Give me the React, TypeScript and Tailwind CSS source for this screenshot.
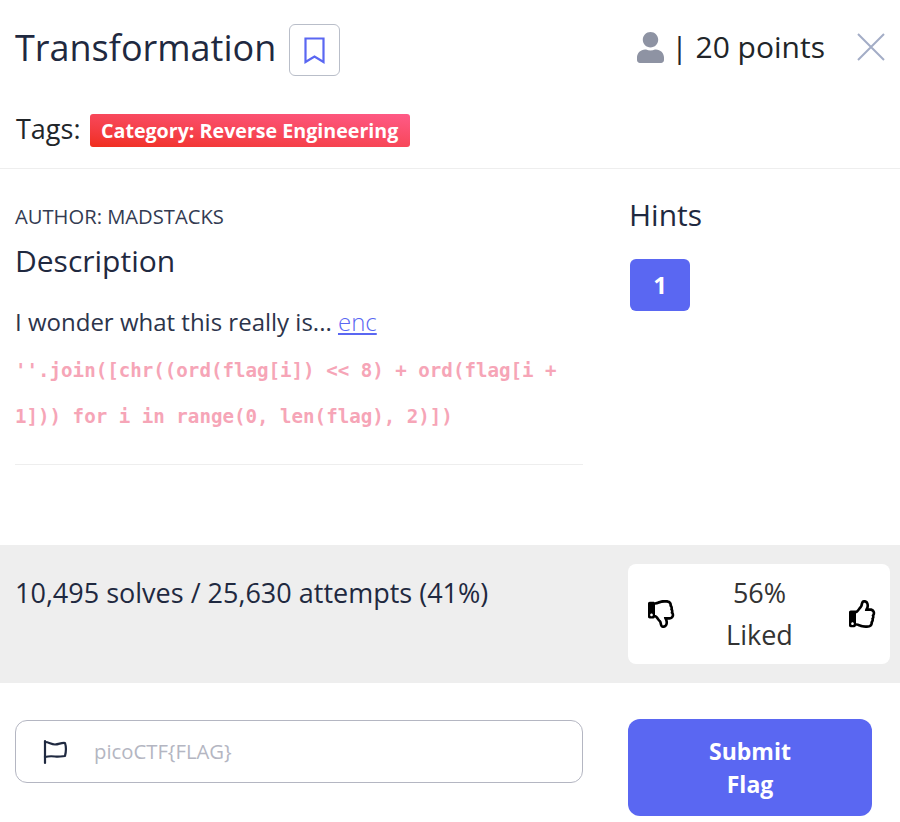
import { FaUser } from "react-icons/fa";
import { FaRegThumbsDown, FaRegThumbsUp } from "react-icons/fa";

function App() {
    return (
        <div className="w-[900px] h-[822px] overflow-hidden bg-white text-[#212529] font-['Open_Sans',sans-serif]">
            <div className="h-[169px] border-b border-[#eeeeee] flex flex-col">
                <div className="h-[114px] pl-[15px] pr-[14px] flex items-start justify-between">
                    <div className="flex items-center mt-[24px] gap-[13px]">
                        <h1 className="text-[36px] leading-[46px] text-[#1f2940] -mt-[5px]">Transformation</h1>
                        <button className="w-[51px] h-[52px] border border-[#b9bec9] rounded-md flex items-center justify-center">
                            <svg className="w-[21px] h-[27px] text-[#5a67f2]" viewBox="0 0 21 27" fill="none" stroke="currentColor" strokeWidth="2.2" strokeLinejoin="miter">
                                <path d="M1.5 1.5h18v23.5l-9-5.5-9 5.5z" />
                            </svg>
                        </button>
                    </div>
                    <div className="flex items-center mt-[23px] h-[48px]">
                        <FaUser className="w-[27px] h-[31px] text-[#8e93a3]" />
                        <span className="text-[30px] ml-[7px] -mt-[2px] text-[#212529]">| 20 points</span>
                        <svg className="w-[30px] h-[30px] ml-[31px] text-[#a3adc6]" viewBox="0 0 30 30" fill="none" stroke="currentColor" strokeWidth="2">
                            <path d="M2 2l26 26M28 2L2 28" />
                        </svg>
                    </div>
                </div>
                <div className="flex items-center pl-[16px] gap-[9px]">
                    <span className="text-[27px] leading-[32px] -mt-[4px]">Tags:</span>
                    <span className="h-[33px] px-[11.5px] rounded-[3px] flex items-center text-white font-bold text-[19.65px] bg-gradient-to-tr from-[#f02d1a] to-[#ff5a87]">
                        Category: Reverse Engineering
                    </span>
                </div>
            </div>

            <div className="h-[376px] flex">
                <div className="w-[583px] pl-[15px] pt-[32px]">
                    <p className="text-[20.2px] leading-[30px] text-[#333b52]">AUTHOR: MADSTACKS</p>
                    <h3 className="text-[30px] leading-[40px] mt-[10px] text-[#1f2940]">Description</h3>
                    <p className="text-[24px] leading-[36px] mt-[23px] text-[#2c344b]">
                        I wonder what this really is... <a className="text-[#5a67f2] underline font-light">enc</a>
                    </p>
                    <div className="mt-[8px] pb-[24px] border-b border-[#eeeeee]">
                        <code className="block text-[19.15px] leading-[46px] font-bold text-[#f6a5b7] font-['DejaVu_Sans_Mono',monospace]">
                            ''.join([chr((ord(flag[i]) &lt;&lt; 8) + ord(flag[i +<br />
                            1])) for i in range(0, len(flag), 2)])
                        </code>
                    </div>
                </div>
                <div className="flex-1 pl-[46px] pt-[26px]">
                    <h3 className="text-[30px] leading-[40px] text-[#1f2940]">Hints</h3>
                    <button className="mt-[24px] ml-[1px] w-[60px] h-[52px] rounded-md bg-[#5a67f2] text-white font-bold text-[24px]">1</button>
                </div>
            </div>

            <div className="h-[138px] bg-[#eeeeee] flex">
                <div className="w-[628px] pl-[15px] pt-[28px] text-[27px] leading-[40px] text-[#1f2940]">
                    10,495 solves / 25,630 attempts (41%)
                </div>
                <div className="mt-[19px] w-[262px] h-[100px] bg-white rounded-lg flex items-center justify-between pl-[20px] pr-[13px]">
                    <FaRegThumbsDown className="w-[28px] h-[28px] text-black" />
                    <div className="text-center text-[27px] leading-[42px] text-[#333333] mr-[6px]">
                        <div>56%</div>
                        <div>Liked</div>
                    </div>
                    <FaRegThumbsUp className="w-[28px] h-[28px] text-black" />
                </div>
            </div>

            <div className="flex pt-[36px]">
                <div className="w-[628px] pl-[15px] pt-[1px]">
                    <div className="w-[568px] h-[63px] border border-[#b4b6c2] rounded-xl flex items-center pl-[26px]">
                        <svg className="w-[26px] h-[26px] text-[#1f2940]" viewBox="0 0 26 26" fill="none" stroke="currentColor" strokeWidth="2.2" strokeLinecap="round" strokeLinejoin="round">
                            <path d="M3 2v22" />
                            <path d="M3 3c4 0 6 2.5 10 2.5 4 0 6-2 10-1.5 1 3 1 9 0 13-4 .5-6 1-10 .5-4-.5-6-.5-10 .5" />
                        </svg>
                        <span className="ml-[26px] text-[20.3px] text-[#b4b6c2]">picoCTF{"{FLAG}"}</span>
                    </div>
                </div>
                <button className="w-[244px] h-[97px] rounded-xl bg-[#5a67f2] text-white font-bold text-[23px] leading-[33px] px-[60px]">
                    Submit Flag
                </button>
            </div>
        </div>
    );
}

export default App;
